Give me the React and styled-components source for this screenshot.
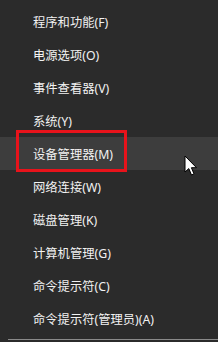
import styled, { createGlobalStyle } from 'styled-components'

const GlobalStyle = createGlobalStyle`
    html, body {
        margin: 0;
        padding: 0;
        background-color: #2b2b2b;
    }
    body {
        width: 218px;
        height: 342px;
        overflow: hidden;
    }
`

const Menu = styled.div`
    position: relative;
    width: 218px;
    height: 342px;
    background-color: #2b2b2b;
    padding-top: 5px;
    box-sizing: border-box;
    font-family: "Noto Sans", "Noto Sans CJK SC", sans-serif;
`

const Item = styled.div`
    position: relative;
    height: 33px;
    display: flex;
    align-items: center;
    padding-left: 33px;
    font-size: 12.3px;
    color: #f2f2f2;
    background-color: ${props => (props.$active ? '#3d3d3d' : 'transparent')};
    white-space: nowrap;
`

const Mark = styled.div`
    position: absolute;
    left: 16px;
    top: -7px;
    width: 111px;
    height: 42px;
    border: 3px solid #e8131b;
    box-sizing: border-box;
`

const Cursor = styled.svg`
    position: absolute;
    left: 184px;
    top: 155px;
`

const Separator = styled.div`
    margin: 4px 0 0 8px;
    height: 1px;
    background-color: #8a8a8a;
`

const items = [
    '程序和功能(F)',
    '电源选项(O)',
    '事件查看器(V)',
    '系统(Y)',
    '设备管理器(M)',
    '网络连接(W)',
    '磁盘管理(K)',
    '计算机管理(G)',
    '命令提示符(C)',
    '命令提示符(管理员)(A)',
]

const App = () => {
    return (
        <>
            <GlobalStyle />
            <Menu>
                {items.map((label, index) => (
                    <Item key={index} $active={index === 4}>
                        {label}
                        {index === 4 && <Mark />}
                    </Item>
                ))}
                <Separator />
                <Cursor width="14" height="22" viewBox="0 0 14 22">
                    <path
                        d="M1 1 L1 17 L4.8 13.6 L7.5 20 L10 18.9 L7.4 12.7 L12.5 12.7 Z"
                        fill="#ffffff"
                        stroke="#000000"
                        strokeWidth="1"
                        strokeLinejoin="round"
                    />
                </Cursor>
            </Menu>
        </>
    )
}

export default App
